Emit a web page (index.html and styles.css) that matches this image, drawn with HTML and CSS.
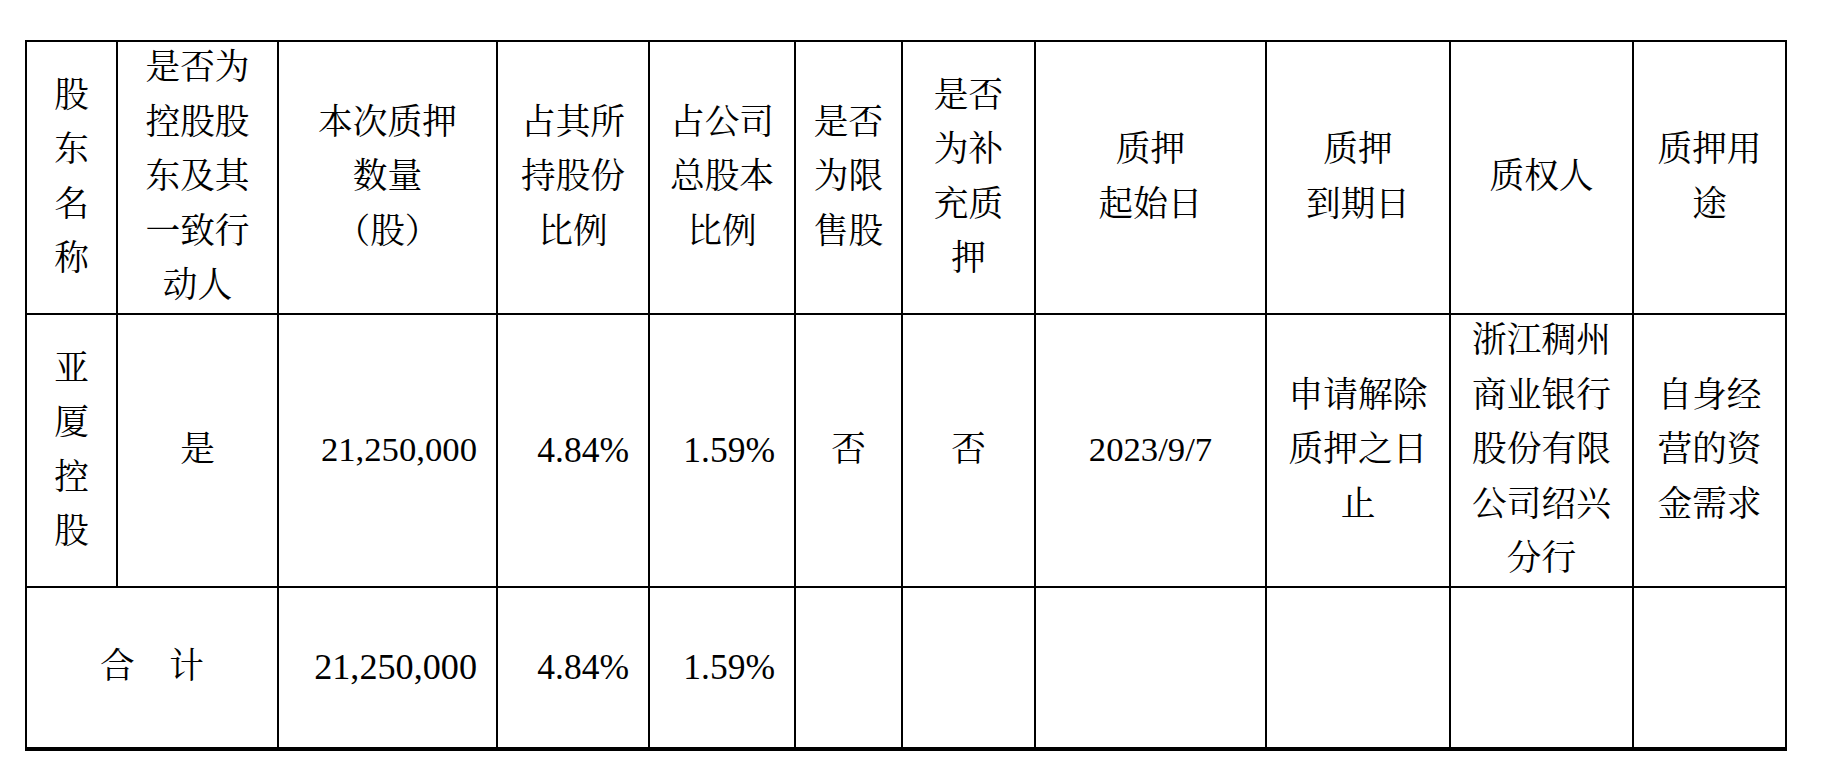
FILE: index.html
```html
<!DOCTYPE html>
<html lang="zh-CN">
<head>
<meta charset="utf-8">
<title>质押情况</title>
<link rel="stylesheet" href="styles.css">
</head>
<body>
<div class="sheet">
  <div class="cell">股<br>东<br>名<br>称</div>
  <div class="cell">是否为<br>控股股<br>东及其<br>一致行<br>动人</div>
  <div class="cell">本次质押<br>数量<br>（股）</div>
  <div class="cell">占其所<br>持股份<br>比例</div>
  <div class="cell">占公司<br>总股本<br>比例</div>
  <div class="cell">是否<br>为限<br>售股</div>
  <div class="cell">是否<br>为补<br>充质<br>押</div>
  <div class="cell">质押<br>起始日</div>
  <div class="cell">质押<br>到期日</div>
  <div class="cell">质权人</div>
  <div class="cell">质押用<br>途</div>

  <div class="cell">亚<br>厦<br>控<br>股</div>
  <div class="cell">是</div>
  <div class="cell num num-sm">21,250,000</div>
  <div class="cell num">4.84%</div>
  <div class="cell num">1.59%</div>
  <div class="cell">否</div>
  <div class="cell">否</div>
  <div class="cell date">2023/9/7</div>
  <div class="cell">申请解除<br>质押之日<br>止</div>
  <div class="cell">浙江稠州<br>商业银行<br>股份有限<br>公司绍兴<br>分行</div>
  <div class="cell">自身经<br>营的资<br>金需求</div>

  <div class="cell span2">合　计</div>
  <div class="cell num num-lg">21,250,000</div>
  <div class="cell num">4.84%</div>
  <div class="cell num">1.59%</div>
  <div class="cell"></div>
  <div class="cell"></div>
  <div class="cell"></div>
  <div class="cell"></div>
  <div class="cell"></div>
  <div class="cell"></div>
  <div class="cell"></div>
</div>
</body>
</html>
```

FILE: styles.css
```css
html, body {
  margin: 0;
  padding: 0;
  background: #ffffff;
}

body {
  font-family: "Liberation Serif", "Noto Serif CJK SC", "Noto Sans CJK SC", serif;
  color: #000000;
}

.sheet {
  display: grid;
  grid-template-columns: 89px 159px 217px 150px 144px 105px 131px 229px 182px 181px 151px;
  grid-template-rows: 271px 271px 159px;
  gap: 2px;
  padding: 2px;
  background: #000000;
  width: max-content;
  margin: 40px 0 0 25px;
}

.cell {
  background: #ffffff;
  display: flex;
  align-items: center;
  justify-content: center;
  text-align: center;
  font-size: 34.7px;
  line-height: 54.5px;
}

.num {
  justify-content: flex-end;
  padding-right: 19px;
  font-size: 35.5px;
}

.num-sm {
  font-size: 34.7px;
}

.num-lg {
  font-size: 36.2px;
}

.date {
  font-size: 34.7px;
}

.span2 {
  grid-column: span 2;
}
```
